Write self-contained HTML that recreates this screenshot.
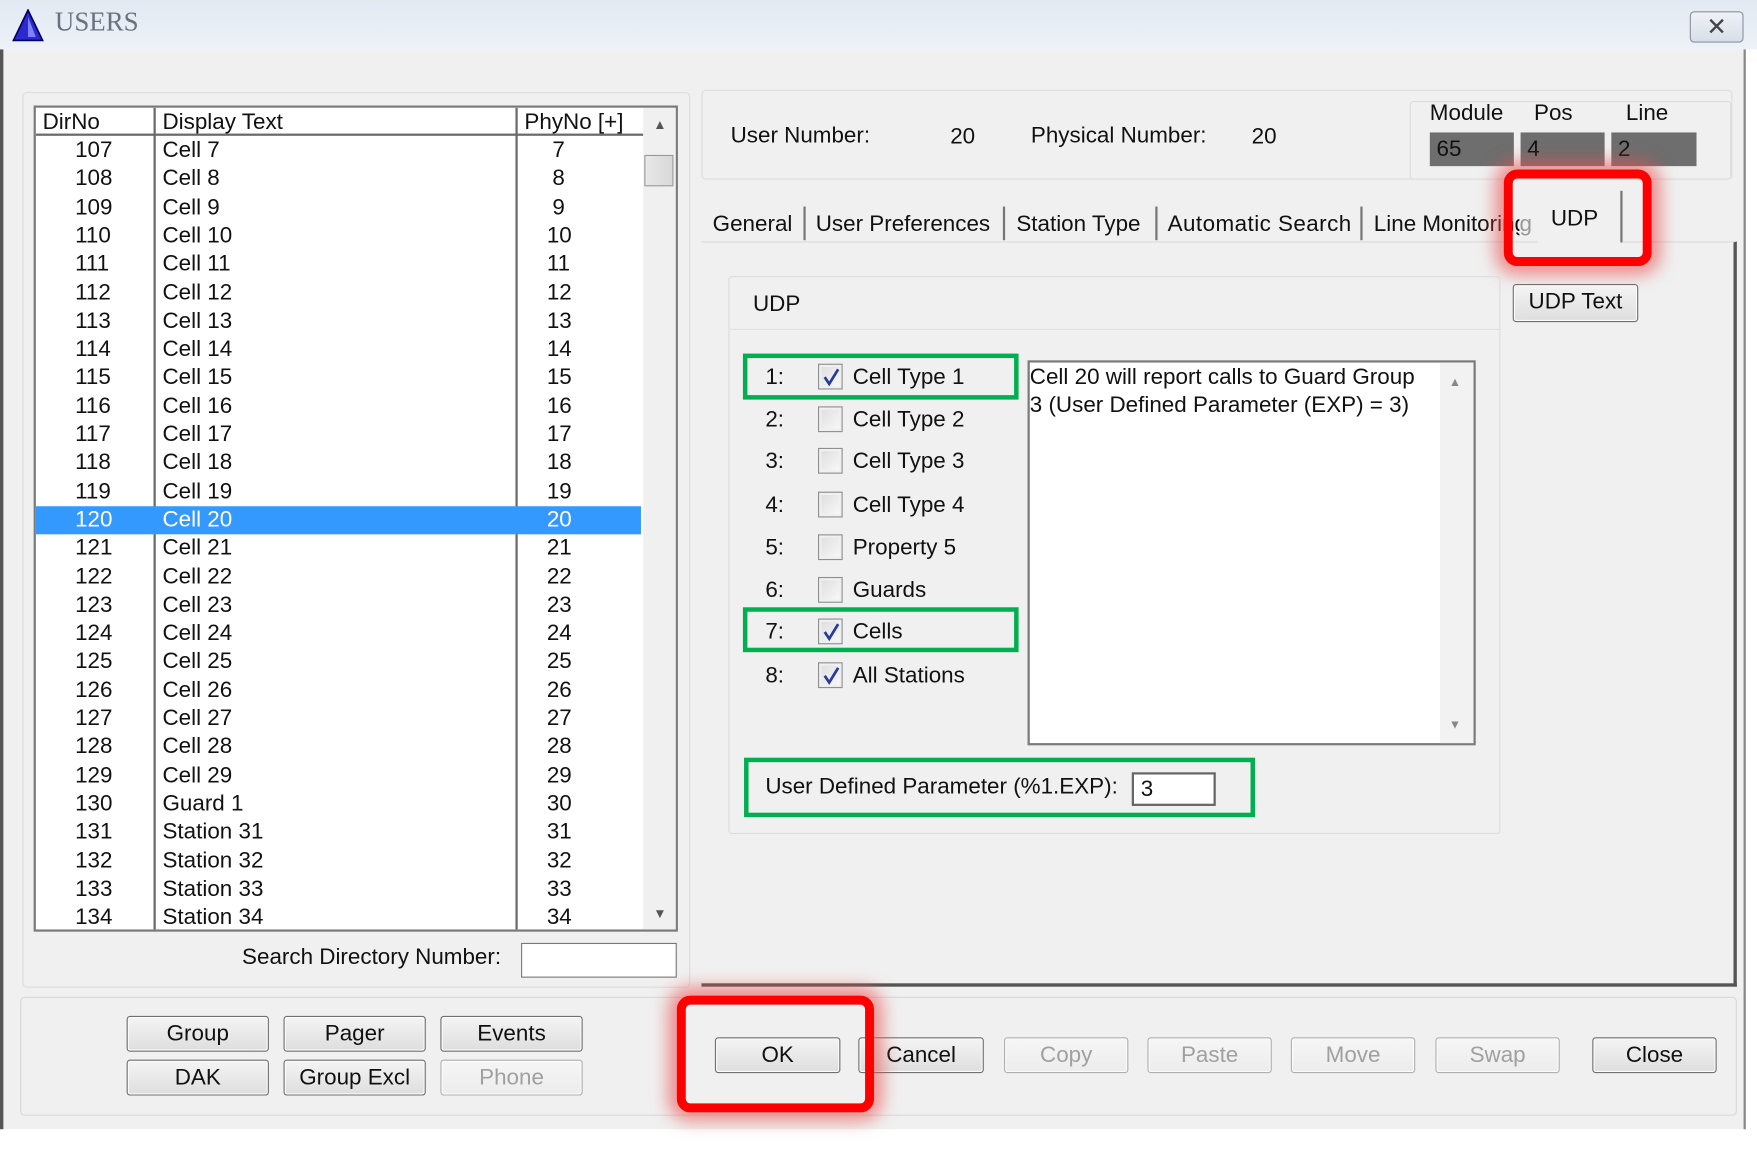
<!DOCTYPE html>
<html><head><meta charset="utf-8"><style>
*{box-sizing:border-box;margin:0;padding:0}
html,body{width:1757px;height:1158px;overflow:hidden;background:#fff}
#w{position:absolute;left:0;top:0;width:1568px;height:1032px;transform-origin:0 0;transform:scale(1.12054,1.1225);font-family:"Liberation Sans",sans-serif;font-size:20px;color:#111}
.a{position:absolute}
.t{position:absolute;white-space:nowrap;line-height:24px}
.btn{position:absolute;height:32px;border:1px solid #707070;border-radius:3px;background:linear-gradient(#f4f4f4,#dedede);box-shadow:inset 0 0 0 1px #fcfcfc;text-align:center;line-height:30px;font-size:20px}
.dis{color:#a0a0a0;border-color:#b0b0b0;background:linear-gradient(#f6f6f6,#ececec)}
.cb{position:absolute;width:22px;height:23px;border:1px solid #8e8f8f;background:linear-gradient(135deg,#dcdcdc,#fafafa);box-shadow:inset 0 0 0 2px #f0f0f0}
.cb svg{position:absolute;left:3px;top:3px}
.grn{position:absolute;border:4px solid #00b050}
.red{position:absolute;border:8px solid #ff0000;border-radius:12px;box-shadow:0 0 14px 8px rgba(235,80,80,.6)}
.row{position:absolute;left:0;width:540px;height:25.3px;line-height:25px}
.row span{position:absolute}
</style></head><body><div id="w">
<div class="a" style="left:0;top:0;width:1568px;height:44px;background:linear-gradient(#e2e9f2,#edf2f8)"></div>
<svg class="a" style="left:10px;top:8px" width="30" height="30"><polygon points="15,1 28,28 2,28" fill="#2a2ad0" stroke="#000060" stroke-width="1.5"/><polygon points="15,7 22,25 15,25" fill="#8080ff"/></svg>
<div class="t" style="left:49px;top:8px;font-family:'Liberation Serif',serif;font-size:24px;color:#6a7280">USERS</div>
<div class="a" style="left:1508px;top:10px;width:48px;height:28px;border:1px solid #8a93a0;border-radius:4px;background:linear-gradient(#eef2f7,#d8dfe8);text-align:center;font-size:22px;line-height:26px;color:#444">✕</div>
<div class="a" style="left:0;top:44px;width:1558px;height:962px;background:#f0f0f0;border-left:3px solid #555;border-right:2px solid #888"></div>

<div class="a" style="left:20px;top:82px;width:596px;height:798px;border:1px solid #dcdcdc;border-radius:4px"></div>
<div class="a" style="left:30px;top:94px;width:575px;height:736px;border:2px solid #7a7a7a;background:#fff;overflow:hidden">
 <div class="a" style="left:0;top:0;width:542px;height:25px;border-bottom:2px solid #6a6a6a;background:#fff"></div>
 <div class="t" style="left:6px;top:1px">DirNo</div><div class="t" style="left:113px;top:1px">Display Text</div><div class="t" style="left:436px;top:1px">PhyNo [+]</div>
 <div class="a" style="left:105px;top:0;width:2px;height:740px;background:#6a6a6a"></div>
 <div class="a" style="left:428px;top:0;width:2px;height:740px;background:#6a6a6a"></div>
 <div class="a" style="left:542px;top:0;width:31px;height:740px;background:#f0f0f0"></div>
 <div class="t" style="left:551px;top:3px;font-size:12px;color:#555">▲</div>
 <div class="a" style="left:543px;top:42px;width:26px;height:28px;border:1px solid #999;background:linear-gradient(90deg,#e8e8e8,#d8d8d8)"></div>
 <div class="t" style="left:551px;top:706px;font-size:12px;color:#555">▼</div>
 <div class="a" id="rows" style="left:0;top:26px;width:542px;height:720px"></div>
</div>
<div class="t" style="left:216px;top:841px">Search Directory Number:</div>
<div class="a" style="left:465px;top:840px;width:139px;height:31px;border:1px solid #777;background:#fff"></div>

<div class="a" style="left:626px;top:80px;width:920px;height:80px;border:1px solid #dcdcdc;border-radius:4px"></div>
<div class="t" style="left:652px;top:109px">User Number:</div>
<div class="t" style="left:848px;top:110px">20</div>
<div class="t" style="left:920px;top:109px">Physical Number:</div>
<div class="t" style="left:1117px;top:110px">20</div>
<div class="a" style="left:1258px;top:90px;width:287px;height:70px;border:1px solid #dcdcdc;border-radius:3px"></div>
<div class="t" style="left:1276px;top:89px">Module</div><div class="t" style="left:1369px;top:89px">Pos</div><div class="t" style="left:1451px;top:89px">Line</div>
<div class="a" style="left:1276px;top:118px;width:75px;height:30px;background:#6e6e6e;padding-left:6px;line-height:30px">65</div>
<div class="a" style="left:1357px;top:118px;width:75px;height:30px;background:#6e6e6e;padding-left:6px;line-height:30px">4</div>
<div class="a" style="left:1438px;top:118px;width:76px;height:30px;background:#6e6e6e;padding-left:6px;line-height:30px">2</div>

<div class="a" style="left:626px;top:215px;width:924px;height:664px;border-top:1px solid #dadada;border-right:3px solid #555;border-bottom:3px solid #555"></div>
<div class="t" style="left:636px;top:188px">General</div>
<div class="a" style="left:717px;top:184px;width:2px;height:30px;background:#777"></div>
<div class="t" style="left:728px;top:188px">User Preferences</div>
<div class="a" style="left:895px;top:184px;width:2px;height:30px;background:#777"></div>
<div class="t" style="left:907px;top:188px">Station Type</div>
<div class="a" style="left:1031px;top:184px;width:2px;height:30px;background:#777"></div>
<div class="t" style="left:1042px;top:188px;letter-spacing:0.4px">Automatic Search</div>
<div class="a" style="left:1214px;top:184px;width:2px;height:30px;background:#777"></div>
<div class="t" style="left:1226px;top:188px;width:130px;overflow:hidden">Line Monitoring</div>
<div class="t" style="left:1356px;top:188px;color:#999">g</div>
<div class="a" style="left:1372px;top:170px;width:76px;height:46px;background:#f0f0f0;border-right:2px solid #777"></div>
<div class="t" style="left:1384px;top:183px">UDP</div>
<div class="red" style="left:1342px;top:151px;width:132px;height:86px"></div>

<div class="a" style="left:650px;top:246px;width:689px;height:497px;border:1px solid #dcdcdc;border-radius:3px"></div>
<div class="a" style="left:651px;top:293px;width:687px;height:1px;background:#e0e0e0"></div>
<div class="t" style="left:672px;top:259px">UDP</div>
<div class="btn" style="left:1350px;top:253px;width:112px;height:34px">UDP Text</div>

<div id="cbs"></div>
<div class="a" style="left:917px;top:321px;width:400px;height:343px;border:2px solid #7a7a7a;background:#fff"></div>
<div class="a" style="left:1285px;top:323px;width:30px;height:339px;background:#f2f2f2"></div>
<div class="t" style="left:1293px;top:329px;font-size:11px;color:#888">▲</div>
<div class="t" style="left:1293px;top:634px;font-size:11px;color:#888">▼</div>
<div class="t" style="left:919px;top:324px">Cell 20 will report calls to Guard Group</div>
<div class="t" style="left:919px;top:349px">3 (User Defined Parameter (EXP) = 3)</div>
<div class="grn" style="left:663px;top:315px;width:246px;height:41px"></div>
<div class="grn" style="left:663px;top:541px;width:246px;height:40px"></div>
<div class="grn" style="left:664px;top:675px;width:456px;height:53px"></div>
<div class="t" style="left:683px;top:689px">User Defined Parameter (%1.EXP):</div>
<div class="a" style="left:1010px;top:688px;width:75px;height:30px;border:2px solid #666;background:#fff;padding-left:6px;line-height:27px">3</div>

<div class="a" style="left:18px;top:888px;width:1532px;height:106px;border:1px solid #d8d8d8;border-radius:4px"></div>
<div class="btn" style="left:113px;top:905px;width:127px">Group</div>
<div class="btn" style="left:253px;top:905px;width:127px">Pager</div>
<div class="btn" style="left:393px;top:905px;width:127px">Events</div>
<div class="btn" style="left:113px;top:944px;width:127px">DAK</div>
<div class="btn" style="left:253px;top:944px;width:127px">Group Excl</div>
<div class="btn dis" style="left:393px;top:944px;width:127px">Phone</div>
<div class="btn" style="left:638px;top:924px;width:112px">OK</div>
<div class="btn" style="left:766px;top:924px;width:112px">Cancel</div>
<div class="btn dis" style="left:896px;top:924px;width:111px">Copy</div>
<div class="btn dis" style="left:1024px;top:924px;width:111px">Paste</div>
<div class="btn dis" style="left:1152px;top:924px;width:111px">Move</div>
<div class="btn dis" style="left:1281px;top:924px;width:111px">Swap</div>
<div class="btn" style="left:1421px;top:924px;width:111px">Close</div>
<div class="red" style="left:604px;top:887px;width:176px;height:104px"></div>
</div>
<script>
var r=document.getElementById('rows'),h='';
var names=['Cell 7','Cell 8','Cell 9','Cell 10','Cell 11','Cell 12','Cell 13','Cell 14','Cell 15','Cell 16','Cell 17','Cell 18','Cell 19','Cell 20','Cell 21','Cell 22','Cell 23','Cell 24','Cell 25','Cell 26','Cell 27','Cell 28','Cell 29','Guard 1','Station 31','Station 32','Station 33','Station 34'];
var phy=[7,8,9,10,11,12,13,14,15,16,17,18,19,20,21,22,23,24,25,26,27,28,29,30,31,32,33,34];
for(var i=0;i<28;i++){var s=i==13;h+='<div class="row" style="top:'+(i*25.3)+'px;'+(s?'background:#3399ff;color:#fff;':'')+'"><span style="left:35px">'+(107+i)+'</span><span style="left:113px">'+names[i]+'</span><span style="left:'+(phy[i]<10?461:456)+'px">'+phy[i]+'</span></div>';}
r.innerHTML=h;
var c=document.getElementById('cbs'),ys=[336,374,411,450,488,526,563,602],lb=['Cell Type 1','Cell Type 2','Cell Type 3','Cell Type 4','Property 5','Guards','Cells','All Stations'],ck=[1,0,0,0,0,0,1,1],g='';
for(var j=0;j<8;j++){g+='<div class="t" style="left:683px;top:'+(ys[j]-12)+'px">'+(j+1)+':</div><div class="cb" style="left:730px;top:'+(ys[j]-12)+'px">'+(ck[j]?'<svg width="16" height="16"><path d="M2 8 L6 14 L14 1" fill="none" stroke="#2a3a9a" stroke-width="2.4"/></svg>':'')+'</div><div class="t" style="left:761px;top:'+(ys[j]-12)+'px">'+lb[j]+'</div>';}
c.innerHTML=g;
</script>
</body></html>
